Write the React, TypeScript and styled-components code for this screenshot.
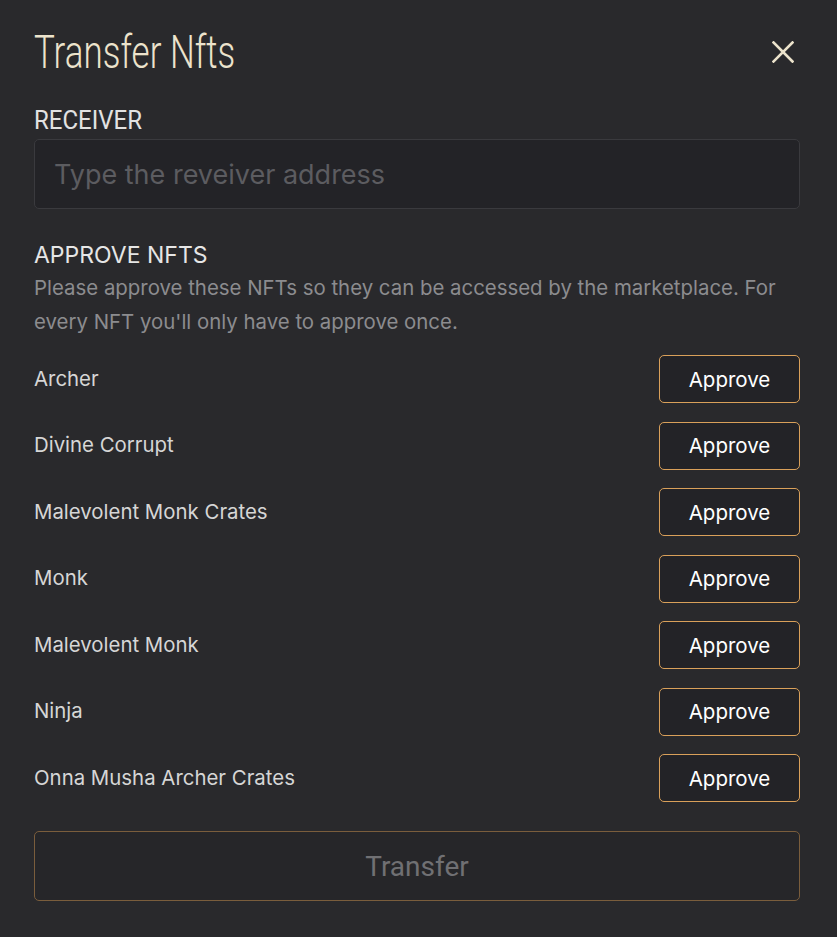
import React from "react";
import styled, { createGlobalStyle } from "styled-components";

const Global = createGlobalStyle`
  html, body { margin: 0; padding: 0; background: #29292c; }
  body { font-family: Inter, "Noto Sans", sans-serif; }
  * { box-sizing: border-box; }
`;

const Modal = styled.div`
  width: 837px;
  min-height: 937px;
  background: #29292c;
  padding: 26px 37px 0 34px;
  display: flex;
  flex-direction: column;
`;

const Header = styled.div`
  display: flex;
  align-items: center;
  justify-content: space-between;
  height: 52px;
`;

const Condensed = styled.span<{ $scale?: number }>`
  display: inline-block;
  font-family: Roboto, sans-serif;
  transform: scaleX(${(p) => p.$scale ?? 0.75});
  transform-origin: left center;
  white-space: nowrap;
`;

const Title = styled.h1`
  margin: 0;
  font-family: Roboto, sans-serif;
  font-weight: 300;
  font-size: 46px;
  line-height: 52px;
  color: #ece3cc;
`;

const CloseButton = styled.button`
  background: none;
  border: none;
  padding: 0;
  width: 28px;
  height: 28px;
  display: flex;
  align-items: center;
  justify-content: center;
  margin-right: 3px;
  cursor: pointer;
`;

const Label = styled.div`
  margin-top: 28px;
  font-family: Roboto, sans-serif;
  font-size: 25px;
  line-height: 30px;
  color: #e2e2e2;
`;

const Input = styled.input`
  margin-top: 3px;
  width: 766px;
  height: 70px;
  background: #232327;
  border: 1px solid #3a3a3e;
  border-radius: 5px;
  padding: 0 19px;
  font-family: Inter, sans-serif;
  font-size: 27px;
  color: #ddd;
  outline: none;
  &::placeholder { color: #5c5c60; }
`;

const SectionTitle = styled.div`
  margin-top: 31px;
  font-size: 23px;
  line-height: 30px;
  color: #e6e6e6;
`;

const Description = styled.p`
  margin: 1px 0 0;
  font-size: 20.4px;
  line-height: 34px;
  color: #8c8c8f;
`;

const List = styled.div`
  margin-top: 16px;
  display: flex;
  flex-direction: column;
  gap: 18.5px;
`;

const Row = styled.div`
  display: flex;
  align-items: center;
  justify-content: space-between;
  height: 48px;
`;

const Name = styled.span`
  font-size: 20.4px;
  color: #d6d6d6;
  margin-top: -2px;
`;

const ApproveButton = styled.button`
  width: 141px;
  height: 48px;
  background: #232327;
  border: 1px solid #d9a05a;
  border-radius: 5px;
  color: #ffffff;
  font-family: Inter, sans-serif;
  font-size: 20.5px;
  font-weight: 400;
  cursor: pointer;
`;

const TransferButton = styled.button`
  margin-top: 29px;
  width: 766px;
  height: 70px;
  background: #262629;
  border: 1px solid #7a5d3c;
  border-radius: 5px;
  color: #707073;
  font-family: Roboto, sans-serif;
  font-size: 28px;
  display: flex;
  align-items: center;
  justify-content: center;
  cursor: default;
`;

const nfts = [
  "Archer",
  "Divine Corrupt",
  "Malevolent Monk Crates",
  "Monk",
  "Malevolent Monk",
  "Ninja",
  "Onna Musha Archer Crates",
];

export default function App() {
  return (
    <>
      <Global />
      <Modal>
        <Header>
          <Title>
            <Condensed $scale={0.76}>Transfer Nfts</Condensed>
          </Title>
          <CloseButton aria-label="close">
            <svg width="22" height="22" viewBox="0 0 22 22">
              <path d="M1.5 1.5 L20.5 20.5 M20.5 1.5 L1.5 20.5" stroke="#ece3cc" strokeWidth="2.6" strokeLinecap="square" />
            </svg>
          </CloseButton>
        </Header>
        <Label>
          <Condensed $scale={0.96}>RECEIVER</Condensed>
        </Label>
        <Input placeholder="Type the reveiver address" />
        <SectionTitle>APPROVE NFTS</SectionTitle>
        <Description>
          Please approve these NFTs so they can be accessed by the marketplace. For every NFT you'll only have to approve once.
        </Description>
        <List>
          {nfts.map((n) => (
            <Row key={n}>
              <Name>{n}</Name>
              <ApproveButton>Approve</ApproveButton>
            </Row>
          ))}
        </List>
        <TransferButton>Transfer</TransferButton>
      </Modal>
    </>
  );
}
